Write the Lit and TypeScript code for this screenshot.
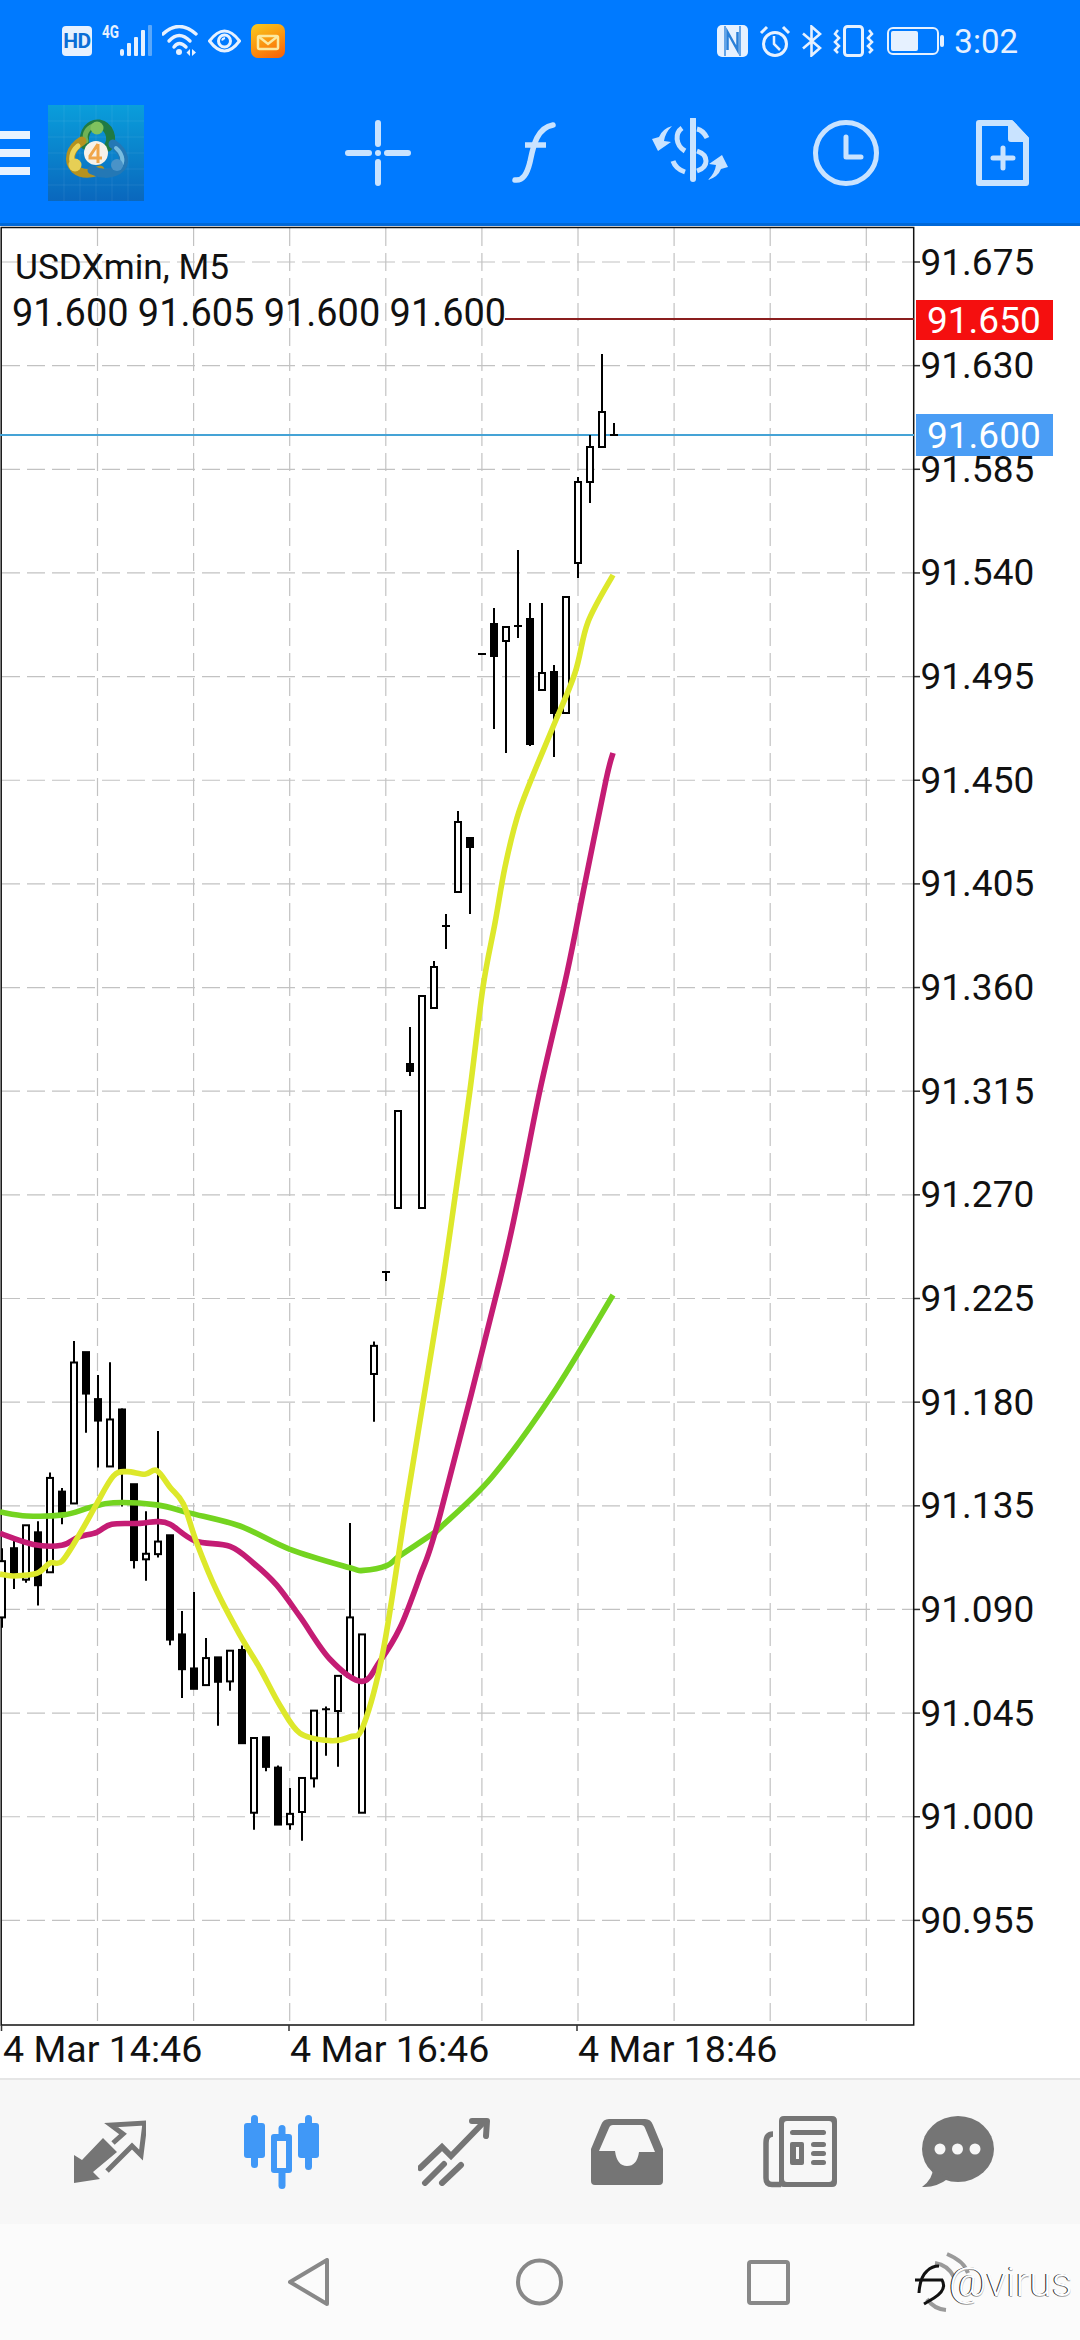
import { LitElement, html, css, svg } from "lit";
import { customElement } from "lit/decorators.js";

type Pt = [number, number];
type Candle = [number, number, number, number, number, number];

const z3y = (v: number) => 1280 + v / 2.703;
const fromZoom3 = (pts: Pt[]): Pt[] => pts.map(([x, y]) => [x / 3, z3y(y)]);

// x(zoomed), wickTop, bodyTop, bodyBottom, wickBottom, filled — zoomed units
const candlesA: Candle[] = [
  [6, 725, 760, 912, 940, 0], [42, 705, 725, 795, 835, 1], [78, 663, 663, 810, 818, 0],
  [114, 652, 682, 825, 880, 1], [150, 520, 535, 790, 790, 0], [186, 562, 572, 632, 660, 1],
  [222, 165, 223, 604, 604, 0], [258, 195, 195, 307, 413, 1], [294, 257, 322, 380, 507, 1],
  [330, 222, 377, 504, 504, 0], [366, 347, 350, 520, 612, 1], [402, 552, 552, 757, 780, 1],
  [438, 625, 740, 755, 813, 0], [474, 408, 707, 741, 750, 0], [510, 690, 690, 972, 987, 1],
  [546, 895, 958, 1052, 1130, 1], [582, 843, 1050, 1105, 1105, 1], [618, 968, 1022, 1095, 1095, 0],
  [654, 1020, 1020, 1086, 1205, 1], [690, 1002, 1002, 1085, 1110, 0], [726, 988, 1000, 1252, 1252, 1],
  [762, 1238, 1238, 1440, 1486, 0], [798, 1236, 1236, 1316, 1328, 1], [834, 1312, 1318, 1472, 1472, 1],
  [870, 1373, 1443, 1471, 1486, 0], [906, 1346, 1346, 1438, 1516, 0], [942, 1164, 1164, 1347, 1372, 0],
  [978, 1153, 1160, 1160, 1286, 2], [1014, 1070, 1070, 1165, 1316, 0], [1050, 657, 912, 1072, 1072, 0],
  [1086, 958, 958, 1440, 1440, 0], [1122, 166, 178, 254, 383, 0],
];

// Real page pixels
const candlesB: Candle[] = [
  [386, 1272, 1272, 1272, 1281, 2], [398, 1111, 1111, 1208, 1208, 0], [410, 1027, 1064, 1071, 1076, 1],
  [422, 996, 996, 1208, 1208, 0], [434, 961, 967, 1008, 1008, 0], [446, 914, 926, 926, 949, 2],
  [458, 811, 822, 892, 893, 0], [470, 838, 838, 847, 914, 1], [482, 654, 654, 654, 654, 2],
  [494, 608, 624, 656, 729, 1], [506, 627, 627, 641, 753, 0], [518, 550, 626, 626, 638, 2],
  [530, 603, 619, 744, 746, 1], [542, 603, 673, 690, 690, 0], [554, 665, 672, 713, 757, 1],
  [566, 597, 597, 713, 713, 0], [578, 477, 482, 563, 578, 0], [590, 435, 447, 482, 503, 0],
  [602, 354, 412, 447, 447, 0], [614, 423, 435, 435, 435, 2],
];

const yellow: Pt[] = [
  ...fromZoom3([[0, 795], [40, 800], [110, 793], [150, 765], [186, 760], [240, 685], [290, 605], [340, 530],
    [380, 518], [435, 525], [470, 515], [510, 560], [550, 605], [590, 710], [650, 840], [720, 960], [780, 1050],
    [840, 1150], [900, 1225], [990, 1245], [1050, 1235], [1090, 1205], [1150, 1000], [1220, 600], [1280, 270]]),
  [443, 1280], [455, 1197], [470, 1090], [483, 987], [495, 923], [505, 867], [517, 818], [531, 780], [553, 727],
  [575, 673], [588, 622], [613, 575],
];
const magenta: Pt[] = [
  ...fromZoom3([[0, 685], [100, 715], [185, 717], [235, 695], [290, 682], [335, 660], [420, 658], [470, 653],
    [510, 660], [585, 705], [690, 720], [760, 765], [830, 825], [900, 910], [990, 1025], [1085, 1085], [1140, 1030],
    [1200, 940], [1260, 800], [1320, 635]]),
  [500, 1280], [520, 1190], [540, 1090], [567, 973], [585, 883], [606, 780], [613, 753],
];
const green: Pt[] = [
  ...fromZoom3([[0, 627], [80, 638], [190, 635], [270, 615], [340, 602], [470, 608], [570, 630], [720, 665],
    [870, 728], [1050, 778], [1090, 785], [1160, 772], [1200, 745], [1300, 685], [1320, 670]]),
  [492, 1477], [552, 1395], [613, 1295],
];

function smooth(p: Pt[]): string {
  let d = `M${p[0][0].toFixed(1)} ${p[0][1].toFixed(1)}`;
  for (let i = 0; i < p.length - 1; i++) {
    const a = p[Math.max(0, i - 1)], b = p[i], c = p[i + 1], e = p[Math.min(p.length - 1, i + 2)];
    const c1: Pt = [b[0] + (c[0] - a[0]) / 6, b[1] + (c[1] - a[1]) / 6];
    const c2: Pt = [c[0] - (e[0] - b[0]) / 6, c[1] - (e[1] - b[1]) / 6];
    d += `C${c1[0].toFixed(1)} ${c1[1].toFixed(1)} ${c2[0].toFixed(1)} ${c2[1].toFixed(1)} ${c[0].toFixed(1)} ${c[1].toFixed(1)}`;
  }
  return d;
}

const PRICES = ["91.675", "91.630", "91.585", "91.540", "91.495", "91.450", "91.405", "91.360", "91.315", "91.270",
  "91.225", "91.180", "91.135", "91.090", "91.045", "91.000", "90.955"];
const gridY = (k: number) => 262 + 103.65 * k;
const V_GRID = [0, 1, 2, 3, 4, 5, 6, 7, 8].map((k) => 97.5 + 96.1 * k);

function candle(x: number, wt: number, bt: number, bb: number, wb: number, f: number) {
  if (f === 2) {
    return svg`<path class="wick" d="M${x} ${wt}V${wb}M${x - 4} ${bt}H${x + 4}"></path>`;
  }
  return svg`<path class="wick" d="M${x} ${wt}V${wb}"></path>
    <rect class=${f ? "body-fill" : "body-open"} x=${x - 3} y=${bt} width="6" height=${Math.max(bb - bt, 2)}></rect>`;
}

@customElement("app-chart")
class AppChart extends LitElement {
  static styles = css`
    :host { display: block; height: 1852px; background: #fff; }
    svg { display: block; }
    text { font-family: Roboto, "Liberation Sans", sans-serif; }
    .price, .stamp, .sym, .ohlc { fill: #111; }
    .price { font-size: 37px; }
    .stamp { font-size: 37.6px; }
    .sym { font-size: 35.3px; }
    .ohlc { font-size: 37.9px; }
    .tag { font-size: 37px; fill: #fff; }
    .grid { stroke: #c2c2c2; stroke-width: 1.2; stroke-dasharray: 18 7; fill: none; }
    .frame { fill: none; stroke: #111; stroke-width: 1.5; }
    .tick { stroke: #333; stroke-width: 1.5; }
    .wick { stroke: #000; stroke-width: 2; fill: none; }
    .body-fill { fill: #000; stroke: #000; stroke-width: 2; }
    .body-open { fill: #fff; stroke: #000; stroke-width: 2; }
    .ma { fill: none; stroke-width: 5.6; stroke-linejoin: round; stroke-linecap: butt; }
    .ma-y { stroke: #dde82b; }
    .ma-m { stroke: #c41c74; }
    .ma-g { stroke: #74d420; }
    .ask { stroke: #8a1e1e; stroke-width: 2; }
    .bid { stroke: #45a3d6; stroke-width: 2; }
    .box-r { fill: #f50f0f; }
    .box-b { fill: #4a9df5; }
  `;
  render() {
    const A = candlesA.map(([x, a, b, c, d, f]) => candle(x / 3, z3y(a), z3y(b), z3y(c), z3y(d), f));
    const B = candlesB.map(([x, a, b, c, d, f]) => candle(x, a, b, c, d, f));
    return html`<svg width="1080" height="1852" viewBox="0 226 1080 1852">
      ${V_GRID.map((x) => svg`<path class="grid" d="M${x} 228V2025"></path>`)}
      ${PRICES.map((_, k) => svg`<path class="grid" d="M2 ${gridY(k)}H913"></path>
        <path class="tick" d="M913 ${gridY(k)}H920"></path>`)}
      <rect class="frame" x="1.2" y="227.5" width="912.5" height="1797.5"></rect>
      <path class="tick" d="M1.5 2025v6M289 2025v6M577 2025v6"></path>
      <path class="ask" d="M505 319H914"></path>
      <path class="bid" d="M0 435H914"></path>
      ${A}${B}
      <path class="ma ma-g" d=${smooth(green)}></path>
      <path class="ma ma-m" d=${smooth(magenta)}></path>
      <path class="ma ma-y" d=${smooth(yellow)}></path>
      <text class="sym" x="15" y="279">USDXmin, M5</text>
      <text class="ohlc" x="12" y="326">91.600 91.605 91.600 91.600</text>
      ${PRICES.map((p, k) => svg`<text class="price" x="920.500" y=${gridY(k) + 12.5}>${p}</text>`)}
      <rect class="box-r" x="916" y="300" width="137" height="40"></rect>
      <text class="tag" x="927" y="333">91.650</text>
      <rect class="box-b" x="916" y="414" width="137" height="42"></rect>
      <text class="tag" x="927" y="448">91.600</text>
      <text class="stamp" x="3" y="2062">4 Mar 14:46</text>
      <text class="stamp" x="290" y="2062">4 Mar 16:46</text>
      <text class="stamp" x="578" y="2062">4 Mar 18:46</text>
    </svg>`;
  }
}

@customElement("app-root")
class AppRoot extends LitElement {
  static styles = css`
    :host { display: flex; flex-direction: column; width: 1080px; height: 2340px; background: #fff;
      font-family: Roboto, "Liberation Sans", sans-serif; overflow: hidden; }
    svg { display: block; flex: none; }
    header { background: #007aff; height: 223px; border-bottom: 3px solid #0068d8; flex: none; }
    .status { height: 82px; display: flex; align-items: center; padding: 0 62px; gap: 10px; }
    .hd { width: 30px; height: 30px; border-radius: 4px; background: #e6f1ff; color: #0a6ed6; font-size: 21px;
      font-weight: 700; letter-spacing: -0.5px; display: flex; align-items: center; justify-content: center; }
    .sig-t { font: 700 18px Roboto, "Liberation Sans", sans-serif; fill: #e6f1ff; }
    .spacer { flex: 1; }
    .m1 { margin-right: 1px; }
    .m3 { margin-right: 3px; }
    .time { color: #e6f1ff; font-size: 33px; line-height: 1; margin-left: -1px; }
    .actions { height: 141px; display: flex; align-items: center; }
    .burger { width: 30px; height: 44px; margin-right: 18px; display: flex; flex-direction: column;
      justify-content: space-between; }
    .burger i { display: block; height: 8px; background: #e8f3ff; }
    .group { margin-left: auto; width: 780px; display: grid; grid-template-columns: repeat(5, 156px);
      justify-items: center; align-items: center; }
    .toolbar { height: 146px; flex: none; box-sizing: border-box; background: #f7f7f7; border-top: 2px solid #e6e6e6;
      display: grid; grid-template-columns: 170px 172px 173px 173px 174px 142px; padding: 0 0 0 25px;
      justify-items: center; align-items: center; }
    .navbar { height: 116px; flex: none; background: #fbfbfb; display: flex; align-items: center; padding-left: 288px; }
    .nav-a { margin-right: 187px; }
    .nav-b { margin-right: 184px; }
    .nav-c { margin-right: 122px; }
    .mark { display: flex; align-items: center; }
    .mark span { margin-left: -23px; font-size: 41px; font-weight: 300; color: #fff; text-shadow: -1px 0 #222, 0 1px #aaa; }
  `;

  private statusLeft() {
    return html`
      <div class="hd">HD</div>
      <svg width="50" height="40" viewBox="0 -4 50 40">
        <text class="sig-t" x="0" y="13" textLength="17" lengthAdjust="spacingAndGlyphs">4G</text>
        <g fill="#e6f1ff"><rect x="18" y="24" width="4" height="7" rx="2"></rect><rect x="25" y="18" width="4" height="13" rx="1"></rect>
        <rect x="32" y="12" width="4" height="19" rx="1"></rect><rect x="39" y="5" width="4" height="26" rx="1"></rect></g>
        <rect x="46" y="0" width="4" height="31" rx="1" fill="#5ba8fa"></rect>
      </svg>
      <svg width="36" height="32" viewBox="0 0 36 32" fill="none" stroke="#e6f1ff" stroke-width="3.4" stroke-linecap="round">
        <path d="M1 9Q17 -6 34 9"></path><path d="M7 16Q17 5 28 16"></path><path d="M12 22Q17 15 24 22"></path>
        <circle cx="17" cy="27" r="3" fill="#e6f1ff" stroke="none"></circle>
        <path d="M28 24L24.500 27.500L28 31ZM30 24L34 27.500L30 31Z" fill="#e6f1ff" stroke="none"></path>
      </svg>
      <svg width="33" height="26" viewBox="0 0 33 26" fill="none" stroke="#e6f1ff" stroke-width="3">
        <path d="M1.500 13Q16.500 -7 31.500 13Q16.500 33 1.500 13Z"></path><circle cx="16.500" cy="13" r="6"></circle>
        <path d="M14 12.500Q14.500 10.500 17 10" stroke-width="2"></path>
      </svg>
      <svg width="34" height="34" viewBox="0 0 34 34">
        <defs><linearGradient id="ml" x1="0.2" y1="0" x2="0.7" y2="1">
          <stop offset="0" stop-color="#f8c41e"></stop><stop offset="0.65" stop-color="#fb8a0c"></stop><stop offset="1" stop-color="#f8680a"></stop>
        </linearGradient></defs>
        <rect width="34" height="34" rx="7" fill="url(#ml)"></rect>
        <rect x="7" y="12" width="20" height="13" rx="1.500" fill="none" stroke="#fbe9a0" stroke-width="2.500"></rect>
        <path d="M7 12L17 20L27 12" fill="none" stroke="#fbe9a0" stroke-width="2.500"></path>
      </svg>`;
  }

  private statusRight() {
    return html`
      <svg class="m1" width="31" height="32" viewBox="0 0 31 32">
        <rect width="31" height="32" rx="5" fill="#e6f1ff"></rect>
        <path d="M8 1V31M23 1V31" fill="none" stroke="#3a8ae0" stroke-width="1.500"></path>
        <path d="M10.500 25V7L20.500 25V7" fill="none" stroke="#2a7fd8" stroke-width="2.500"></path>
      </svg>
      <svg width="32" height="32" viewBox="0 0 32 32" fill="none" stroke="#e6f1ff" stroke-width="3">
        <circle cx="16" cy="19" r="11.500"></circle><path d="M15 11V19L21 25" stroke-width="2.500"></path><path d="M2 8L8 2M30 8L24 2"></path>
      </svg>
      <svg width="22" height="32" viewBox="0 0 22 32" fill="none" stroke="#e6f1ff" stroke-width="2.600">
        <path d="M2 8.500L19 23L10.500 30.500V1.500L19 9L2 23.500"></path>
      </svg>
      <svg class="m3" width="41" height="32" viewBox="0 0 41 32" fill="none" stroke="#e6f1ff" stroke-width="3">
        <rect x="11.500" y="1.500" width="18" height="29" rx="3"></rect>
        <path d="M5 5L2 9L6 13L2 17L6 21L2 25L5 28" stroke-width="2.500"></path>
        <path d="M36 5L39 9L35 13L39 17L35 21L39 25L36 28" stroke-width="2.500"></path>
      </svg>
      <svg width="58" height="28" viewBox="0 0 58 28">
        <rect x="1" y="1" width="50" height="26" rx="5" fill="none" stroke="#e6f1ff" stroke-width="2"></rect>
        <rect x="4" y="4" width="27" height="20" rx="2" fill="#e6f1ff"></rect>
        <rect x="53" y="8" width="4" height="12" rx="2" fill="#e6f1ff"></rect>
      </svg>
      <div class="time">3:02</div>`;
  }

  private logo() {
    const grid = [16, 32, 48, 64, 80];
    return html`<svg width="96" height="96" viewBox="0 0 96 96">
      <defs><linearGradient id="lg" x1="0" y1="0" x2="0" y2="1">
        <stop offset="0" stop-color="#0a9edb"></stop><stop offset="1" stop-color="#0a67bd"></stop>
      </linearGradient></defs>
      <rect width="96" height="96" fill="url(#lg)"></rect>
      ${grid.map((g) => svg`<path d="M${g} 0V96M0 ${g}H96" stroke="#fff" stroke-opacity=".07" stroke-width="1"></path>`)}
      <g fill="none" stroke-linecap="round">
        <path d="M37 40C34 26 43 18 51 19C61 21 66 33 60 42" stroke="#1f7a44" stroke-width="9"></path>
        <path d="M38 36C35 28 41 21 47 21" stroke="#6fb356" stroke-width="5"></path>
        <path d="M34 36C22 43 19 56 27 64C34 70 44 69 52 65" stroke="#b5921f" stroke-width="9"></path>
        <path d="M30 41C23 47 22 55 26 60" stroke="#ecd55a" stroke-width="5"></path>
        <path d="M65 39C77 47 79 59 70 65C62 70 52 69 44 65" stroke="#2478b5" stroke-width="9"></path>
        <path d="M68 43C74 48 76 55 73 60" stroke="#78bde0" stroke-width="4"></path>
      </g>
      <circle cx="49" cy="23" r="6.500" fill="#7fc25e"></circle>
      <circle cx="27" cy="60" r="6.500" fill="#e6cf55"></circle>
      <circle cx="69" cy="60" r="6" fill="#4a93c8"></circle>
      <circle cx="48" cy="48" r="12" fill="#f7f2ea"></circle>
      <path d="M50 39L42 51V53H54M50 39V58" fill="none" stroke="#f0a64a" stroke-width="3"></path>
    </svg>`;
  }

  private actions() {
    const c = "#c9e3ff";
    return html`
      <svg width="66" height="66" viewBox="0 0 66 66" fill=${c}>
        <rect x="0" y="30" width="27" height="6" rx="3"></rect><rect x="39" y="30" width="27" height="6" rx="3"></rect>
        <rect x="30" y="0" width="6" height="27" rx="3"></rect><rect x="30" y="39" width="6" height="27" rx="3"></rect>
        <circle cx="33" cy="33" r="3"></circle>
      </svg>
      <svg width="50" height="70" viewBox="0 0 50 70" fill="none" stroke=${c} stroke-width="5.500" stroke-linecap="round">
        <path d="M6 62C14 63 18 56 21 44C24 30 27 10 44 7"></path><path d="M16 27H37" stroke-linecap="butt"></path>
      </svg>
      <svg width="78" height="70" viewBox="0 0 78 70" fill="none" stroke=${c} stroke-width="5">
        <path d="M42 1V61" stroke-width="6" stroke-linecap="round"></path>
        <path d="M31 10C24 15 24 27 34 33"></path><path d="M46 11C51 12 54 16 56 20"></path>
        <path d="M22 43C24 49 28 52 34 54"></path><path d="M46 33C58 37 58 49 46 53"></path>
        <path d="M21 8Q11 11 8 19L1 21L7 33L20 24L13 23Q14 15 21 8Z" fill=${c} stroke="none"></path>
        <path d="M21 8Q11 11 8 19L1 21L7 33L20 24L13 23Q14 15 21 8Z" fill=${c} stroke="none" transform="rotate(180 39 35)"></path>
      </svg>
      <svg width="66" height="66" viewBox="0 0 66 66" fill="none" stroke=${c} stroke-width="5">
        <circle cx="33" cy="33" r="30.500"></circle><path d="M33 17V37H48" stroke-linecap="round" stroke-linejoin="round"></path>
      </svg>
      <svg width="53" height="66" viewBox="0 0 53 66" fill="none" stroke=${c} stroke-width="6" stroke-linejoin="round">
        <path d="M3 3H35L50 19V63H3Z"></path><path d="M35 3L50 19H35Z" fill=${c}></path>
        <path d="M27 28V48M17 38H37" stroke-width="5" stroke-linecap="round"></path>
      </svg>`;
  }

  private toolbar() {
    const g = "#757575", bg = "#f7f7f7", on = "#4098f7";
    return html`
      <svg width="72" height="64" viewBox="0 0 72 64">
        <path d="M0 35V63L26 59L19 52L43 32L29 18L8 40Z" fill=${g}></path>
        <path d="M39 23L49 14L37 5L71 3L67 35L58 26L33 51" fill="none" stroke=${g} stroke-width="5"></path>
      </svg>
      <svg width="75" height="74" viewBox="0 0 75 74">
        <g fill=${on}>
          <rect x="7" y="0" width="7" height="53" rx="3.500"></rect><rect x="0" y="8" width="21" height="35" rx="3"></rect>
          <rect x="61" y="0" width="7" height="55" rx="3.500"></rect><rect x="54" y="8" width="21" height="35" rx="3"></rect>
          <rect x="34.500" y="10" width="7" height="64" rx="3.500"></rect><rect x="27" y="19" width="21" height="39" rx="3"></rect>
        </g>
        <rect x="33" y="26" width="9" height="27" fill=${bg}></rect>
      </svg>
      <svg width="72" height="68" viewBox="0 0 72 68" fill="none" stroke=${g} stroke-width="6" stroke-linecap="round">
        <path d="M2 50L24 29L33 38L66 4"></path><path d="M54 3H69L68 18" stroke-linejoin="round"></path>
        <path d="M7 65L26 46M24 65L43 47"></path>
      </svg>
      <svg width="72" height="66" viewBox="0 0 72 66">
        <path fill-rule="evenodd" fill=${g} d="M18 0H54Q60 0 62 6L72 30V62Q72 66 68 66H4Q0 66 0 62V30L10 6Q12 0 18 0ZM22 6Q19 6 18 9L8 32H24Q26 47 36 47Q46 47 48 33H64L54 9Q53 6 50 6Z"></path>
      </svg>
      <svg width="74" height="72" viewBox="0 0 74 72">
        <path fill-rule="evenodd" fill=${g} d="M21 0H69Q74 0 74 5V66Q74 71 69 71H21Q16 71 16 66V5Q16 0 21 0ZM24 5Q21 5 21 8V63Q21 66 24 66H66Q69 66 69 63V8Q69 5 66 5Z"></path>
        <path d="M10 18Q3 18 3 27V62Q3 68.500 9 68.500H18" fill="none" stroke=${g} stroke-width="5.500"></path>
        <g fill=${g}><rect x="27" y="14" width="36" height="5" rx="2.500"></rect>
          <rect x="48" y="26" width="15" height="5" rx="2.500"></rect><rect x="48" y="35" width="15" height="5" rx="2.500"></rect><rect x="48" y="44" width="15" height="5" rx="2.500"></rect>
          <rect x="27" y="26" width="14" height="23" rx="2"></rect></g>
        <rect x="33" y="31" width="3" height="12" fill=${bg}></rect>
      </svg>
      <svg width="72" height="72" viewBox="0 0 72 72">
        <ellipse cx="36" cy="33" rx="36" ry="33" fill=${g}></ellipse>
        <path d="M11 52Q11 63 0 71Q14 72 27 62Z" fill=${g}></path>
        <g fill=${bg}><circle cx="18" cy="33" r="5.500"></circle><circle cx="35.500" cy="33" r="5.500"></circle><circle cx="53" cy="33" r="5.500"></circle></g>
      </svg>`;
  }

  render() {
    return html`
      <header>
        <div class="status">${this.statusLeft()}<div class="spacer"></div>${this.statusRight()}</div>
        <div class="actions">
          <div class="burger"><i></i><i></i><i></i></div>
          ${this.logo()}
          <div class="group">${this.actions()}</div>
        </div>
      </header>
      <app-chart></app-chart>
      <div class="toolbar">${this.toolbar()}</div>
      <div class="navbar">
        <svg class="nav-a" width="41" height="48" viewBox="0 0 41 48" fill="none" stroke="#888" stroke-width="4" stroke-linejoin="round">
          <path d="M39 2V46L2 24Z"></path>
        </svg>
        <svg class="nav-b" width="47" height="48" viewBox="0 0 47 48" fill="none" stroke="#888" stroke-width="4"><circle cx="23.500" cy="24" r="21.500"></circle></svg>
        <svg class="nav-c" width="43" height="45" viewBox="0 0 43 45" fill="none" stroke="#888" stroke-width="4" stroke-linejoin="round"><rect x="2" y="2" width="39" height="41" rx="2"></rect></svg>
        <div class="mark">
          <svg width="60" height="62" viewBox="0 0 60 62" fill="none" stroke-width="3">
            <path d="M35 3Q52 10 56 22" stroke="#9a9a9a" stroke-width="4"></path>
            <path d="M23 12Q36 14 42 26" stroke="#9a9a9a" stroke-width="4"></path>
            <path d="M15 48Q22 58 34 59" stroke="#9a9a9a" stroke-width="4"></path>
            <path d="M3 29H30C34 36 30 42 22 47L12 53" stroke="#111"></path>
            <path d="M7 42Q8 26 15 20Q20 15 27 15" stroke="#111"></path>
          </svg>
          <span>@virus</span>
        </div>
      </div>`;
  }
}
